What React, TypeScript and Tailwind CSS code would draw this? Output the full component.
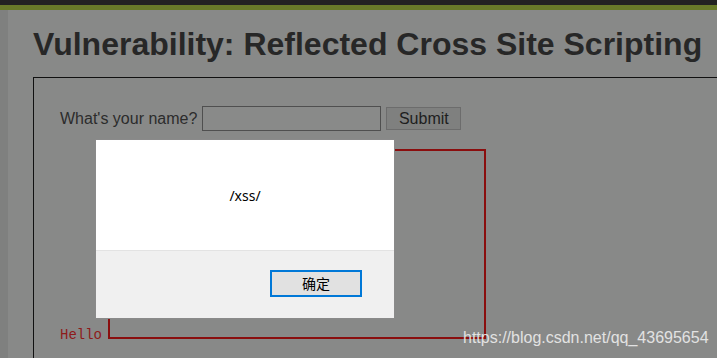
export default function App() {
  return (
    <div className="relative w-[717px] h-[358px] overflow-hidden bg-[#888988] font-['Liberation_Sans',Arial,sans-serif]">
      <div className="h-[5px] bg-[#222222]" />
      <div className="h-[5px] bg-[#687a29]" />
      <div className="flex h-[348px]">
        <div className="w-[8px] shrink-0 bg-[#7f807f]" />
        <div className="flex-1 pl-[25px]">
          <h1 className="mt-[16px] text-[32px] leading-[37px] font-bold text-[#272727] whitespace-nowrap">
            Vulnerability: Reflected Cross Site Scripting
          </h1>
          <div className="mt-[14px] border-l border-t border-[#111] h-[300px] pl-[26px] pt-[28px]">
            <div className="flex items-center text-[16px] text-[#2c2c2c]">
              <span>What's your name?</span>
              <div className="ml-[5px] w-[179px] h-[25px] border border-[#4f4f4f] bg-[#898a89]" />
              <div className="ml-[5px] w-[75px] h-[23px] border border-[#6c6c6c] bg-[#7f807f] flex items-center justify-center text-[#1e1e1e]">
                Submit
              </div>
            </div>
            <div className="mt-[18px] flex items-end">
              <span className="font-['Liberation_Mono',monospace] text-[14px] leading-[14px] mb-[-3px] text-[#8e1b1b]">
                Hello
              </span>
              <div className="ml-[6px] w-[378px] h-[190px] border-2 border-[#8a0e0e]" />
            </div>
          </div>
        </div>
      </div>

      <div className="absolute left-[95px] top-[139px] w-[300px] h-[180px] border border-[#8a8a8a] bg-white flex flex-col">
        <div className="h-[110px] flex items-center justify-center pt-[1px] text-[14px] text-black font-['Noto_Sans','Liberation_Sans',sans-serif]">
          /xss/
        </div>
        <div className="flex-1 bg-[#f0f0f0] border-t border-[#e3e3e3] flex justify-end pr-[32px] pt-[19px]">
          <div className="w-[92px] h-[27px] border-2 border-[#0078d7] bg-[#e1e1e1] flex items-center justify-center text-[14px] text-black font-['Noto_Sans_CJK_SC',sans-serif]">
            确定
          </div>
        </div>
      </div>

      <div className="absolute left-[463px] top-[328px] text-[16px] leading-[20px] text-[#ececec] opacity-90 whitespace-nowrap">
        https://blog.csdn.net/qq_43695654
      </div>
    </div>
  );
}
